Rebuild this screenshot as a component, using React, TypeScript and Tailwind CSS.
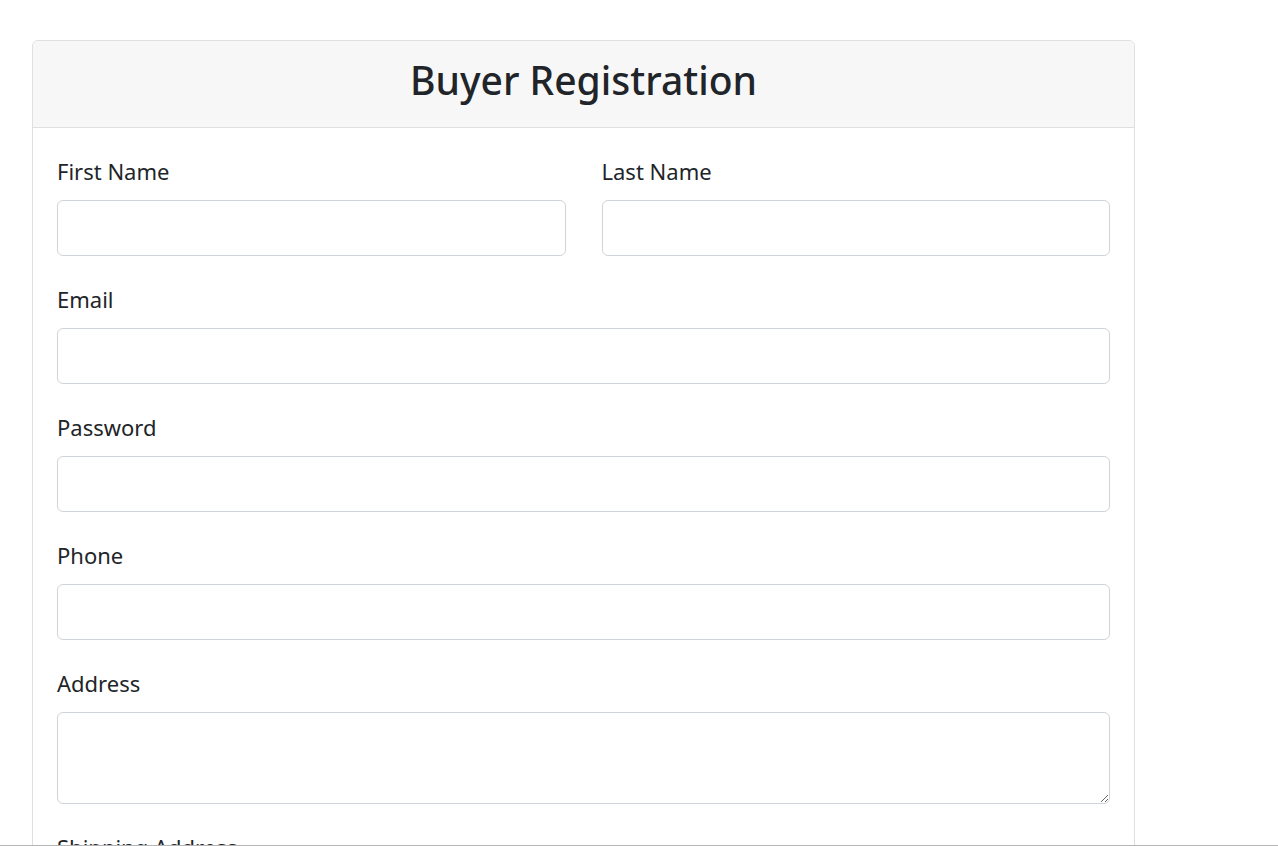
import { useState } from "react";

type Field = {
  name: string;
  label: string;
  type?: string;
  multiline?: boolean;
};

const fields: Field[] = [
  { name: "email", label: "Email", type: "email" },
  { name: "password", label: "Password", type: "password" },
  { name: "phone", label: "Phone", type: "tel" },
  { name: "address", label: "Address", multiline: true },
  { name: "shippingAddress", label: "Shipping Address", multiline: true },
];

const labelClass = "mb-[15px] block text-[22px] leading-[28px]";
const inputClass =
  "w-full h-[56px] rounded-[6px] border border-[#ced4da] bg-white px-4 text-[20px] text-[#212529] outline-none";

function App() {
  const [form, setForm] = useState<Record<string, string>>({});

  const handleChange = (
    ev: React.ChangeEvent<HTMLInputElement | HTMLTextAreaElement>
  ): void => setForm({ ...form, [ev.target.name]: ev.target.value });

  return (
    <div
      className="h-[846px] overflow-hidden border-b border-[#b5b5b5] bg-white pt-10 pl-8 text-[#212529]"
      style={{ fontFamily: '"Noto Sans", "Open Sans", sans-serif' }}
    >
      <div className="w-[1103px] rounded-[6px] border border-[#dfdfdf]">
        <div className="flex h-[87px] items-center justify-center rounded-t-[6px] border-b border-[#dfdfdf] bg-[#f7f7f7] pb-[9px]">
          <h1 className="text-[39px] leading-none font-medium">
            Buyer Registration
          </h1>
        </div>

        <form className="px-6 pt-[29px] pb-6">
          <div className="mb-[29px] grid grid-cols-2 gap-x-9">
            <div>
              <label htmlFor="firstName" className={labelClass}>
                First Name
              </label>
              <input
                className={inputClass}
                type="text"
                name="firstName"
                id="firstName"
                value={form.firstName ?? ""}
                onChange={handleChange}
              />
            </div>
            <div>
              <label htmlFor="lastName" className={labelClass}>
                Last Name
              </label>
              <input
                className={inputClass}
                type="text"
                name="lastName"
                id="lastName"
                value={form.lastName ?? ""}
                onChange={handleChange}
              />
            </div>
          </div>

          {fields.map((field) => (
            <div key={field.name} className="mb-[29px]">
              <label htmlFor={field.name} className={labelClass}>
                {field.label}
              </label>
              {field.multiline ? (
                <textarea
                  className="block h-[92px] w-full rounded-[6px] border border-[#ced4da] bg-white px-4 py-2 text-[20px] outline-none"
                  name={field.name}
                  id={field.name}
                  value={form[field.name] ?? ""}
                  onChange={handleChange}
                />
              ) : (
                <input
                  className={inputClass}
                  type={field.type}
                  name={field.name}
                  id={field.name}
                  value={form[field.name] ?? ""}
                  onChange={handleChange}
                />
              )}
            </div>
          ))}
        </form>
      </div>
    </div>
  );
}

export default App;
